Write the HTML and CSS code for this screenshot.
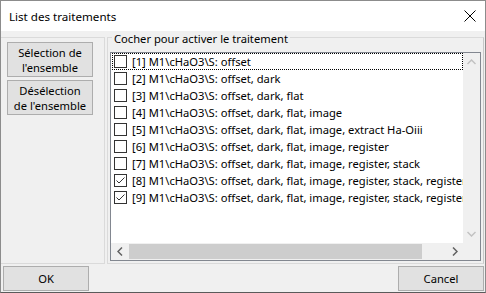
FILE: index.html
```html
<html>
  <head>
    <title>List des traitements</title>
    <link rel="stylesheet" href="styles.css">
  </head>
  <body>
    <div class="window">
      <div class="titlebar">
        <span class="title">List des traitements</span>
        <svg class="close" width="12" height="12" viewBox="0 0 12 12">
          <path d="M0.5 0.5 L11.5 11.5 M11.5 0.5 L0.5 11.5" stroke="#000" stroke-width="1"/>
        </svg>
      </div>

      <div class="content">
        <div class="side">
          <div class="button tall">Sélection de<br>l'ensemble</div>
          <div class="button tall">Désélection<br>de l'ensemble</div>
        </div>

        <div class="group">
          <div class="legend">Cocher pour activer le traitement</div>
          <div class="listbox">
            <div class="items">
              <div class="item focus"><span class="check"></span>[1] M1\cHaO3\S: offset</div>
              <div class="item"><span class="check"></span>[2] M1\cHaO3\S: offset, dark</div>
              <div class="item"><span class="check"></span>[3] M1\cHaO3\S: offset, dark, flat</div>
              <div class="item"><span class="check"></span>[4] M1\cHaO3\S: offset, dark, flat, image</div>
              <div class="item"><span class="check"></span>[5] M1\cHaO3\S: offset, dark, flat, image, extract Ha-Oiii</div>
              <div class="item"><span class="check"></span>[6] M1\cHaO3\S: offset, dark, flat, image, register</div>
              <div class="item"><span class="check"></span>[7] M1\cHaO3\S: offset, dark, flat, image, register, stack</div>
              <div class="item"><span class="check checked"><svg width="11" height="11" viewBox="0 0 11 11"><path d="M1.5 5.5 L4 8 L9.5 2.5" fill="none" stroke="#333" stroke-width="1"/></svg></span>[8] M1\cHaO3\S: offset, dark, flat, image, register, stack, register</div>
              <div class="item"><span class="check checked"><svg width="11" height="11" viewBox="0 0 11 11"><path d="M1.5 5.5 L4 8 L9.5 2.5" fill="none" stroke="#333" stroke-width="1"/></svg></span>[9] M1\cHaO3\S: offset, dark, flat, image, register, stack, register</div>
            </div>
            <div class="vscroll">
              <svg width="9" height="6" viewBox="0 0 9 6"><path d="M0.5 5 L4.5 1 L8.5 5" fill="none" stroke="#c2c2c2" stroke-width="1.5"/></svg>
              <svg width="9" height="6" viewBox="0 0 9 6"><path d="M0.5 1 L4.5 5 L8.5 1" fill="none" stroke="#c2c2c2" stroke-width="1.5"/></svg>
            </div>
            <div class="hscroll">
              <span class="arrow"><svg width="6" height="9" viewBox="0 0 6 9"><path d="M5 0.5 L1 4.5 L5 8.5" fill="none" stroke="#606060" stroke-width="1.5"/></svg></span>
              <span class="thumb"></span>
              <span class="arrow right"><svg width="6" height="9" viewBox="0 0 6 9"><path d="M1 0.5 L5 4.5 L1 8.5" fill="none" stroke="#606060" stroke-width="1.5"/></svg></span>
            </div>
            <div class="corner"></div>
          </div>
        </div>
      </div>

      <div class="footer">
        <div class="button wide">OK</div>
        <div class="button wide">Cancel</div>
      </div>
    </div>
  </body>
</html>
```

FILE: styles.css
```css
body { margin: 0; background-color: #FFFFFF;
       font-family: "Noto Sans", "Open Sans", sans-serif; font-size: 11.2px; color: #000000; }

.window   { width: 486px; height: 293px; box-sizing: border-box;
            border: 1px solid #8c8c8c; border-bottom-color: #5a5a5a;
            background-color: #F0F0F0;
            display: flex; flex-direction: column; }

.titlebar { height: 30px; background-color: #FFFFFF;
            display: flex; align-items: center; justify-content: space-between;
            padding: 0 9px 0 8px; }
.title    { font-size: 11.6px; }
.close    { display: block; }

.content  { display: flex; height: 227px; margin-top: 6px; }

.side     { width: 104px; box-sizing: border-box;
            border: 1px solid #dadada; border-left: none;
            display: flex; flex-direction: column; align-items: flex-start; gap: 3px;
            padding: 4px 0 0 6px; }

.button   { background-color: #E1E1E1; border: 1px solid #ADADAD;
            box-sizing: border-box; text-align: center; }
.button.tall { width: 86px; height: 35px; line-height: 15px; padding-top: 2px; }
.button.wide { width: 86px; height: 25px; line-height: 23px; }

.group    { flex: 1; margin: 0 1px 0 2px; box-sizing: border-box;
            border: 1px solid #dadada; border-right-color: #c8c8c8;
            position: relative; display: flex; flex-direction: column;
            padding: 14px 2px 2px 2px; }
.legend   { position: absolute; top: -7px; left: 4px;
            background-color: #F0F0F0; padding: 0 2px; line-height: 16px; }

.listbox  { flex: 1; border: 1px solid #828790; background-color: #FFFFFF;
            display: grid; grid-template-columns: 1fr 17px; grid-template-rows: 1fr 17px; }

.items    { overflow: hidden; padding: 0 0 0 1px; }
.item     { height: 17px; line-height: 16px; white-space: nowrap;
            display: flex; align-items: center; box-sizing: border-box; padding-left: 2px; }
.item.focus { border: 1px dotted #000000; padding-left: 1px; }

.check    { width: 13px; height: 13px; box-sizing: border-box;
            border: 1px solid #333333; background-color: #FFFFFF;
            margin-right: 5px; flex: none;
            display: flex; align-items: center; justify-content: center; }
.check svg { display: block; }

.vscroll  { background-color: #F0F0F0;
            display: flex; flex-direction: column; justify-content: space-between; align-items: center;
            padding: 6px 0 6px 0; }
.vscroll svg { display: block; }

.hscroll  { background-color: #F0F0F0; display: flex; align-items: center; }
.hscroll .arrow { width: 17px; display: flex; justify-content: center; }
.hscroll .arrow svg { display: block; }
.hscroll .thumb { width: 293px; height: 15px; background-color: #CDCDCD; margin-left: 1px; }
.hscroll .arrow.right { margin-left: auto; }

.corner   { background-color: #F0F0F0; }

.footer   { flex: 1; display: flex; justify-content: space-between; align-items: center;
            padding: 0 1px 0 2px; }
```
